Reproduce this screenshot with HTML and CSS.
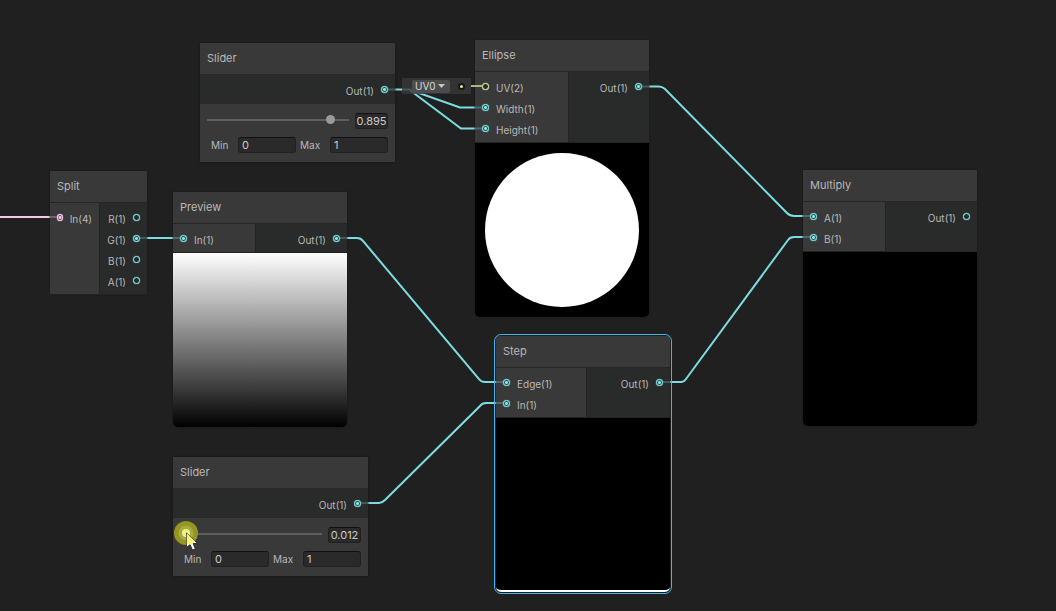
FILE: index.html
```html
<!DOCTYPE html>
<html lang="en">
<head>
<meta charset="UTF-8">
<meta name="viewport" content="width=device-width, initial-scale=1.0">
<title>Shader Graph</title>
<link rel="stylesheet" href="styles.css">
</head>
<body>

<main class="graph">
  <svg class="wires" aria-hidden="true">
    <path class="wire vec4" d="M0 217H60"/>
    <path class="wire" d="M137 238H183"/>
    <path class="wire" d="M337 238H357Q361 238 363 241L479 379Q481 382 485 382H506"/>
    <path class="wire" d="M357 503H379Q382 503 385 500L480 406Q482 403 486 403H506"/>
    <path class="wire" d="M384 89.5H409L460 107.5H485M409 89.5L461 128.5H485"/>
    <path class="wire" d="M638 86.5H659Q662 86.5 665 89L787 213Q790 216 794 216H814"/>
    <path class="wire" d="M659 382H681Q684 382 686 379L788 240Q790 237 794 237H814"/>
  </svg>

  <section class="node slider-node slider-top">
    <h2>Slider</h2>
    <div class="output-row"><div class="port"><span>Out(1)</span><i class="dot on"></i></div></div>
    <div class="controls">
      <div class="row">
        <input type="range" min="0" max="1" step="0.001" value="0.895" aria-label="Slider value">
        <input type="text" class="value" value="0.895" aria-label="Value">
      </div>
      <div class="row">
        <label for="min1">Min</label><input type="text" id="min1" value="0">
        <label for="max1">Max</label><input type="text" id="max1" value="1">
      </div>
    </div>
  </section>

  <section class="node ellipse-node">
    <h2>Ellipse</h2>
    <div class="ports">
      <div class="inputs">
        <div class="port"><i class="dot vec2"></i><span>UV(2)</span></div>
        <div class="port"><i class="dot on"></i><span>Width(1)</span></div>
        <div class="port"><i class="dot on"></i><span>Height(1)</span></div>
      </div>
      <div class="outputs">
        <div class="port"><span>Out(1)</span><i class="dot on"></i></div>
      </div>
    </div>
    <div class="preview"><div class="disc"></div></div>
  </section>

  <div class="uv-slot">
    <div class="uv-box">
      <div class="uv-select">
        <select aria-label="UV channel"><option>UV0</option></select>
        <svg width="7" height="4" viewBox="0 0 7 4" aria-hidden="true"><path d="M0 0H7L3.500 4Z" fill="#c4c4c4"/></svg>
      </div>
      <i class="uv-dot"></i>
    </div>
    <span class="uv-wire"></span>
  </div>

  <section class="node split-node">
    <h2>Split</h2>
    <div class="ports">
      <div class="inputs">
        <div class="port"><i class="dot on vec4"></i><span>In(4)</span></div>
      </div>
      <div class="outputs">
        <div class="port"><span>R(1)</span><i class="dot"></i></div>
        <div class="port"><span>G(1)</span><i class="dot on"></i></div>
        <div class="port"><span>B(1)</span><i class="dot"></i></div>
        <div class="port"><span>A(1)</span><i class="dot"></i></div>
      </div>
    </div>
  </section>

  <section class="node preview-node">
    <h2>Preview</h2>
    <div class="ports">
      <div class="inputs">
        <div class="port"><i class="dot on"></i><span>In(1)</span></div>
      </div>
      <div class="outputs">
        <div class="port"><span>Out(1)</span><i class="dot on"></i></div>
      </div>
    </div>
    <div class="preview gradient"></div>
  </section>

  <section class="node step-node selected">
    <h2>Step</h2>
    <div class="ports">
      <div class="inputs">
        <div class="port"><i class="dot on"></i><span>Edge(1)</span></div>
        <div class="port"><i class="dot on"></i><span>In(1)</span></div>
      </div>
      <div class="outputs">
        <div class="port"><span>Out(1)</span><i class="dot on"></i></div>
      </div>
    </div>
    <div class="preview stepped"></div>
  </section>

  <section class="node multiply-node">
    <h2>Multiply</h2>
    <div class="ports">
      <div class="inputs">
        <div class="port"><i class="dot on"></i><span>A(1)</span></div>
        <div class="port"><i class="dot on"></i><span>B(1)</span></div>
      </div>
      <div class="outputs">
        <div class="port"><span>Out(1)</span><i class="dot"></i></div>
      </div>
    </div>
    <div class="preview"></div>
  </section>

  <section class="node slider-node slider-bottom">
    <h2>Slider</h2>
    <div class="output-row"><div class="port"><span>Out(1)</span><i class="dot on"></i></div></div>
    <div class="controls">
      <div class="row">
        <input type="range" min="0" max="1" step="0.001" value="0.012" aria-label="Slider value">
        <input type="text" class="value" value="0.012" aria-label="Value">
      </div>
      <div class="row">
        <label for="min2">Min</label><input type="text" id="min2" value="0">
        <label for="max2">Max</label><input type="text" id="max2" value="1">
      </div>
    </div>
  </section>

  <!-- mouse pointer with click highlight -->
  <svg class="pointer" width="30" height="34" viewBox="0 0 30 34" aria-hidden="true">
    <circle cx="13" cy="13" r="12" fill="#96951f"/>
    <circle cx="13" cy="13" r="7.500" fill="#a4ac48"/>
    <circle cx="13" cy="13" r="4" fill="#f2f27c"/>
    <path d="M13.500 13V27.500L17 24.500L19.500 30L22.300 28.800L20 23.500H24.500Z" fill="#fff" stroke="#222" stroke-width=".8"/>
    <path d="M13.800 13.800V24.500Q20 24 22 21.500Z" fill="#f6f27a"/>
  </svg>
</main>

</body>
</html>
```
FILE: styles.css
```css
* {
  box-sizing: border-box;
}
body {
  margin: 0;
  background-color: #202020;
  color: #b8b8b8;
  font-family: Inter, "Liberation Sans", sans-serif;
  font-size: 10px;
}
.graph {
  position: relative;
  min-height: 100vh;
  overflow: hidden;
}
.wires {
  position: absolute;
  width: 100%;
  height: 100%;
}
.wire {
  fill: none;
  stroke: #7cdcdf;
  stroke-width: 2;
}
.wire.vec4 { stroke: #f3c6ec; }

/* nodes */
.node {
  position: absolute;
  width: 174px;
  border-radius: 0 0 6px 6px;
  box-shadow: 0 0 2px #151515;
}
.slider-node { width: 195px; border-radius: 0; }
.slider-top { left: 200px; top: 43px; }
.slider-bottom { left: 173px; top: 457px; }
.ellipse-node { left: 475px; top: 40px; }
.split-node { left: 50px; top: 171px; width: 97px; }
.preview-node { left: 173px; top: 192px; }
.step-node { left: 496px; top: 336px; }
.multiply-node { left: 803px; top: 170px; }
.selected {
  outline: 1px solid #44b4ee;
  outline-offset: 1px;
  border-radius: 5px;
}
h2 {
  margin: 0;
  padding: 0 7px;
  background-color: #393939;
  font-size: 11px;
  font-weight: 400;
  line-height: 31px;
}

/* ports */
.ports {
  display: flex;
  border-top: 1px solid #262626;
  border-bottom: 1px solid #232323;
}
.inputs,
.outputs {
  padding: 4px 7px 3px;
}
.inputs { background-color: rgba(65, 65, 65, 0.75); }
.outputs {
  flex: 1;
  border-left: 1px solid #242424;
  background-color: rgba(44, 47, 46, 0.75);
}
.ellipse-node .inputs { width: 93px; }
.split-node .inputs { width: 49px; }
.preview-node .inputs,
.multiply-node .inputs { width: 82px; }
.step-node .inputs { width: 90px; }
.port {
  display: flex;
  align-items: center;
  gap: 7px;
  height: 21px;
}
.port span { padding-top: 3px; }
.outputs .port,
.output-row .port { justify-content: flex-end; }
.output-row {
  padding: 5px 7px 4px;
  background-color: rgba(44, 47, 46, 0.75);
}
.dot {
  width: 7px;
  height: 7px;
  border: 1px solid #84e4e7;
  border-radius: 50%;
  background-color: #232b2c;
  box-shadow: 0 0 1px #84e4e7;
}
.dot.on { background-image: radial-gradient(circle, #84e4e7 1px, #2f4f51 2px); }
.dot.vec2 {
  border-color: #dfe9a0;
  box-shadow: 0 0 1px #dfe9a0;
}
.dot.vec4 {
  border-color: #fbcbf4;
  background-image: radial-gradient(circle, #fbcbf4 1px, #5a4a58 2px);
  box-shadow: 0 0 1px #fbcbf4;
}

/* previews */
.preview {
  display: flex;
  align-items: center;
  justify-content: center;
  aspect-ratio: 1;
  border-radius: 0 0 5px 5px;
  background-color: #000;
}
.disc {
  width: 154px;
  height: 154px;
  border-radius: 50%;
  background-color: #fff;
}
.gradient { background-image: linear-gradient(#fff, #bbb 27%, #777 54%, #333 81%, #000); }
.stepped { border-bottom: 2px solid #fff; }

/* slider controls */
.controls {
  padding: 9px 7px;
  background-color: #393939;
}
.row {
  display: flex;
  align-items: center;
}
.row + .row { margin-top: 8px; }
.row label {
  width: 31px;
  padding-left: 4px;
}
.row label ~ label { width: 34px; }
input[type="text"] {
  flex: 1;
  min-width: 0;
  height: 16px;
  padding: 0 3px;
  border: 1px solid #212121;
  border-top-color: #111;
  border-radius: 3px;
  background-color: #2a2a2a;
  color: #cacaca;
  font-family: inherit;
  font-size: 11px;
}
input.value {
  flex: none;
  width: 33px;
  padding: 0;
  text-align: center;
}
input[type="range"] {
  flex: 1;
  min-width: 0;
  height: 12px;
  margin: 0 6px 3px 0;
  background: transparent;
  appearance: none;
}
input[type="range"]::-webkit-slider-runnable-track {
  height: 2px;
  background-color: #5e5e5e;
}
input[type="range"]::-webkit-slider-thumb {
  width: 9px;
  height: 9px;
  margin-top: -4px;
  border-radius: 50%;
  background-color: #999;
  appearance: none;
}

/* default UV value hanging off the ellipse node */
.uv-slot {
  position: absolute;
  left: 402px;
  top: 78px;
  display: flex;
  align-items: center;
}
.uv-box {
  display: flex;
  align-items: center;
  justify-content: space-between;
  width: 69px;
  height: 16px;
  padding: 0 6px 0 10px;
  background-color: rgba(56, 56, 56, 0.8);
}
.uv-select {
  display: grid;
  align-items: center;
  width: 38px;
}
.uv-select select,
.uv-select svg {
  grid-area: 1 / 1;
}
.uv-select svg {
  justify-self: end;
  margin-right: 5px;
  pointer-events: none;
}
.uv-select select {
  height: 13px;
  padding: 0 3px;
  border: 0;
  border-radius: 2px;
  background-color: #4c4c4c;
  color: #d8d8d8;
  font-family: inherit;
  font-size: 10px;
  appearance: none;
}
.uv-dot {
  width: 7px;
  height: 7px;
  border: 2px solid #161616;
  border-radius: 50%;
  background-color: #e0f080;
}
.uv-wire {
  width: 11px;
  height: 2px;
  background-color: #a5b981;
}

.pointer {
  position: absolute;
  left: 173px;
  top: 520px;
}
```
